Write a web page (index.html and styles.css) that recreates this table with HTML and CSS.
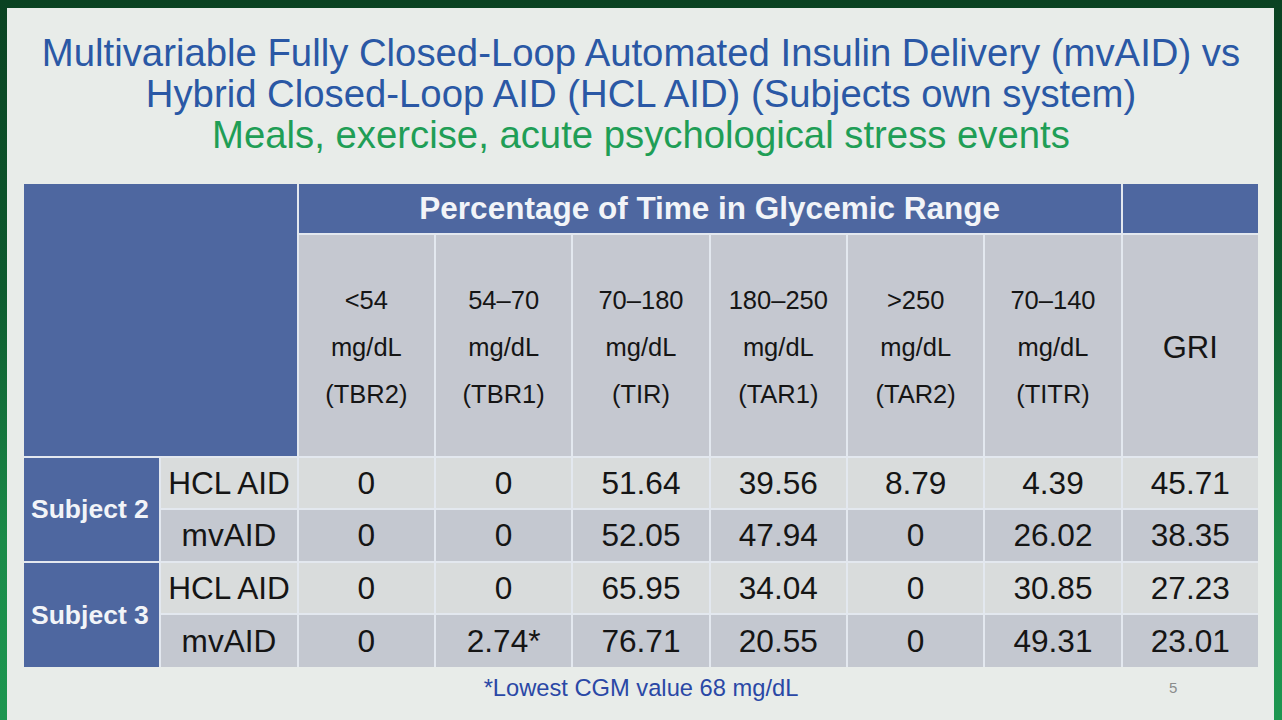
FILE: index.html
```html
<!DOCTYPE html>
<html>
<head>
<meta charset="utf-8">
<link rel="stylesheet" href="styles.css">
</head>
<body>
<div class="frame">
  <div class="slide">
    <div class="title">
      <div class="t-line">Multivariable Fully Closed-Loop Automated Insulin Delivery (mvAID) vs</div>
      <div class="t-line">Hybrid Closed-Loop AID (HCL AID) (Subjects own system)</div>
      <div class="t-line green">Meals, exercise, acute psychological stress events</div>
    </div>
    <div class="grid">
      <div class="c blue corner"></div>
      <div class="c blue span-head">Percentage of Time in Glycemic Range</div>
      <div class="c blue gri-top"></div>
      <div class="c head">&lt;54<br>mg/dL<br>(TBR2)</div>
      <div class="c head">54–70<br>mg/dL<br>(TBR1)</div>
      <div class="c head">70–180<br>mg/dL<br>(TIR)</div>
      <div class="c head">180–250<br>mg/dL<br>(TAR1)</div>
      <div class="c head">&gt;250<br>mg/dL<br>(TAR2)</div>
      <div class="c head">70–140<br>mg/dL<br>(TITR)</div>
      <div class="c head gri">GRI</div>

      <div class="c blue subj s2">Subject 2</div>
      <div class="c d light">HCL AID</div>
      <div class="c d light">0</div>
      <div class="c d light">0</div>
      <div class="c d light">51.64</div>
      <div class="c d light">39.56</div>
      <div class="c d light">8.79</div>
      <div class="c d light">4.39</div>
      <div class="c d light">45.71</div>

      <div class="c d dark">mvAID</div>
      <div class="c d dark">0</div>
      <div class="c d dark">0</div>
      <div class="c d dark">52.05</div>
      <div class="c d dark">47.94</div>
      <div class="c d dark">0</div>
      <div class="c d dark">26.02</div>
      <div class="c d dark">38.35</div>

      <div class="c blue subj s3">Subject 3</div>
      <div class="c d light">HCL AID</div>
      <div class="c d light">0</div>
      <div class="c d light">0</div>
      <div class="c d light">65.95</div>
      <div class="c d light">34.04</div>
      <div class="c d light">0</div>
      <div class="c d light">30.85</div>
      <div class="c d light">27.23</div>

      <div class="c d dark">mvAID</div>
      <div class="c d dark">0</div>
      <div class="c d dark">2.74*</div>
      <div class="c d dark">76.71</div>
      <div class="c d dark">20.55</div>
      <div class="c d dark">0</div>
      <div class="c d dark">49.31</div>
      <div class="c d dark">23.01</div>
    </div>
    <div class="foot">
      <div class="note">*Lowest CGM value 68 mg/dL</div>
      <div class="pnum">5</div>
    </div>
  </div>
</div>
</body>
</html>
```
FILE: styles.css
```css
html, body {
  margin: 0;
  padding: 0;
}
body {
  width: 1282px;
  height: 720px;
  overflow: hidden;
  font-family: "Liberation Sans", Arial, sans-serif;
}
.frame {
  width: 1282px;
  height: 720px;
  box-sizing: border-box;
  padding: 8px 8px 0 7px;
  background: linear-gradient(180deg, #0a4222 0%, #0d5a2e 40%, #1a8a48 75%, #1c9650 100%);
}
.slide {
  width: 1267px;
  height: 712px;
  background: #e8ece9;
  box-sizing: border-box;
  padding: 24px 16px 0 17px;
  display: flex;
  flex-direction: column;
}
.title {
  text-align: center;
  color: #2a58a5;
  font-size: 38.3px;
  line-height: 41px;
}
.t-line {
  white-space: nowrap;
}
.green {
  color: #1f9e56;
}
.grid {
  margin-top: 29px;
  width: 1234px;
  display: grid;
  grid-template-columns: repeat(9, 1fr);
  grid-template-rows: 49px 221px 50px 51px 50px 52px;
  column-gap: 2px;
  row-gap: 2px;
  background: #e3e8ef;
}
.c {
  display: flex;
  align-items: center;
  justify-content: center;
  text-align: center;
  color: #151515;
}
.blue {
  background: #4e67a0;
  color: #f2f4f8;
}
.corner {
  grid-column: 1 / 3;
  grid-row: 1 / 3;
}
.span-head {
  grid-column: 3 / 9;
  font-weight: bold;
  font-size: 31.5px;
}
.head {
  background: #c5c8d0;
  font-size: 25.5px;
  line-height: 47px;
  padding-top: 3px;
}
.gri {
  font-size: 31px;
}
.subj {
  justify-content: flex-start;
  padding-left: 7px;
  font-weight: bold;
  font-size: 26.5px;
}
.s2 {
  grid-column: 1;
  grid-row: 3 / 5;
}
.s3 {
  grid-column: 1;
  grid-row: 5 / 7;
}
.d {
  font-size: 31.6px;
}
.light {
  background: #d9dcdc;
}
.dark {
  background: #c4c8d0;
}
.foot {
  width: 1234px;
  display: flex;
  justify-content: center;
  position: relative;
  margin-top: 8px;
}
.note {
  color: #2a48a6;
  font-size: 23.7px;
}
.pnum {
  position: absolute;
  left: 1145px;
  top: 4px;
  color: #8a8c8c;
  font-size: 15px;
}
```
